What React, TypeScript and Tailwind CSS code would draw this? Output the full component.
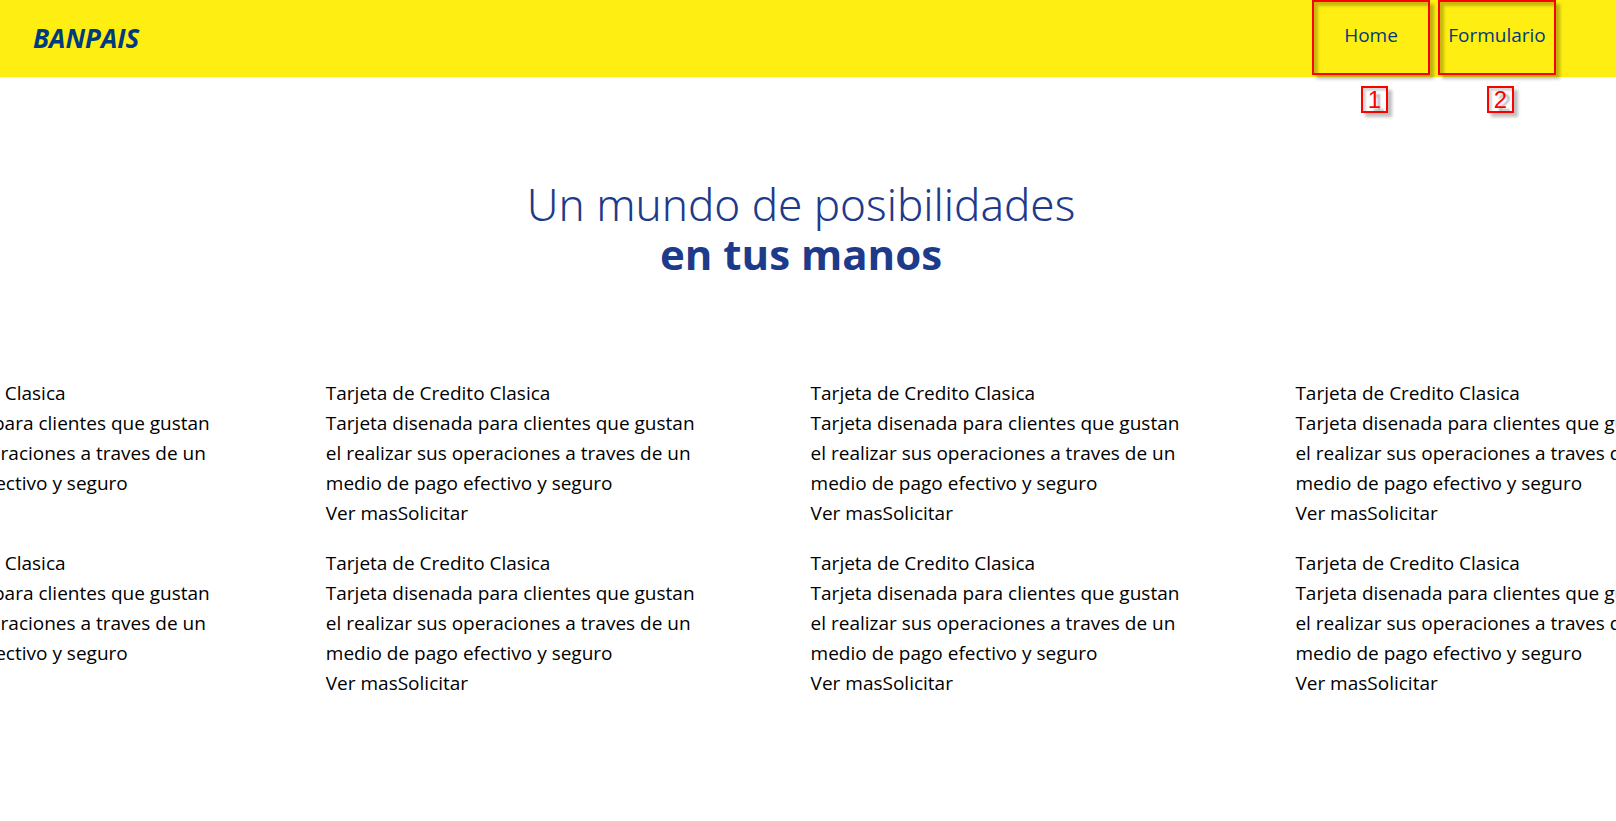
const rows = [0, 1];
const slides = [0, 1, 2, 3];

const links = [
  { label: "Home", href: "#home", mark: "1" },
  { label: "Formulario", href: "#formulario", mark: "2" },
];

function NavLink({ label, href, mark }: { label: string; href: string; mark: string }) {
  return (
    <li className="relative flex">
      <a
        href={href}
        className="flex h-[75px] w-[118px] items-center justify-center border-2 border-[#ff0000] pb-1.5 text-[19px] text-[#003a80] shadow-[4px_4px_3px_rgba(0,0,0,0.25),inset_4px_4px_3px_rgba(0,0,0,0.22)]"
      >
        {label}
      </a>
      <span className="absolute top-[86px] left-[49px] flex size-[27px] items-center justify-center border-2 border-[#ff0000] font-['Liberation_Sans',sans-serif] text-[24px] leading-none text-[#ff0000] shadow-[4px_4px_3px_rgba(0,0,0,0.25),inset_3px_3px_2px_rgba(0,0,0,0.15)] [text-shadow:4px_3px_2px_rgba(0,0,0,0.3)]">
        {mark}
      </span>
    </li>
  );
}

function Card() {
  return (
    <article className="w-[30vw] shrink-0 pr-28">
      <h2>Tarjeta de Credito Clasica</h2>
      <p>
        Tarjeta disenada para clientes que gustan el realizar sus operaciones a traves de un medio de
        pago efectivo y seguro
      </p>
      <div>
        <a href="#ver-mas">Ver mas</a>
        <a href="#solicitar">Solicitar</a>
      </div>
    </article>
  );
}

export default function App() {
  return (
    <div className="min-h-screen overflow-x-hidden bg-white font-['Open_Sans','Noto_Sans',sans-serif] text-[19px] leading-[30px] text-black">
      <header className="flex h-[77px] items-start justify-between bg-[#ffee11] pr-[60px] pl-[33px]">
        <a href="#home" className="self-center pb-0.5 text-[26px] font-bold text-[#003a80] italic">
          BANPAIS
        </a>
        <nav>
          <ul className="flex gap-2">
            {links.map((link) => (
              <NavLink key={link.label} {...link} />
            ))}
          </ul>
        </nav>
      </header>
      <main>
        <h1 className="mt-[102px] pr-[14px] text-center leading-[50px] text-[#1e3a8a]">
          <span className="block font-['Noto_Sans',sans-serif] text-[44px] font-light">
            Un mundo de posibilidades
          </span>
          <span className="block text-[42px] font-bold">en tus manos</span>
        </h1>
        <section className="mt-[99px] -ml-[159px] flex flex-col gap-5">
          {rows.map((row) => (
            <div key={row} className="flex">
              {slides.map((slide) => (
                <Card key={slide} />
              ))}
            </div>
          ))}
        </section>
      </main>
    </div>
  );
}
